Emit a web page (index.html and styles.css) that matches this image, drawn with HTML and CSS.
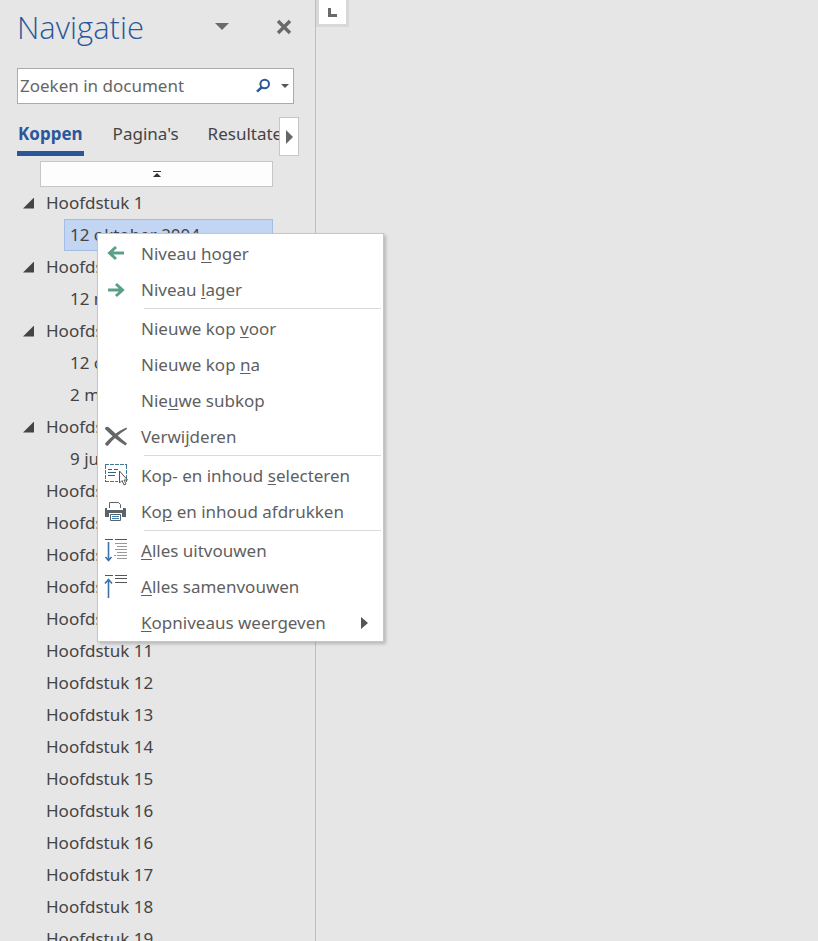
FILE: index.html
```html
<!DOCTYPE html>
<html lang="nl">
<head>
<meta charset="utf-8">
<title>Navigatie</title>
<link rel="stylesheet" href="styles.css">
</head>
<body>
<div class="app">
  <aside class="pane">
    <header class="pane-head">
      <h1>Navigatie</h1>
      <button class="icon-btn pane-menu" aria-label="Opties"><svg width="14" height="8" viewBox="0 0 14 8"><path d="M0 0h14L7 7z" fill="#6a6a6a"/></svg></button>
      <button class="icon-btn" aria-label="Sluiten"><svg width="16" height="16" viewBox="0 0 16 16"><path d="M2 2l12 12M14 2L2 14" stroke="#6a6a6a" stroke-width="3.4" fill="none"/></svg></button>
    </header>
    <form class="search">
      <input type="text" placeholder="Zoeken in document" aria-label="Zoeken in document">
      <button type="button" class="icon-btn" aria-label="Zoeken"><svg width="16" height="16" viewBox="0 0 16 16"><circle cx="9.700" cy="6" r="4.300" fill="none" stroke="#2b579a" stroke-width="2"/><path d="M6.800 9.200L2 13.600" stroke="#2b579a" stroke-width="2.600"/></svg></button>
      <button type="button" class="icon-btn search-more" aria-label="Zoekopties"><svg width="8" height="4" viewBox="0 0 8 4"><path d="M0 0h8L4 4z" fill="#555"/></svg></button>
    </form>
    <div class="tabs">
      <div class="tab-strip">
        <button class="tab active">Koppen</button>
        <button class="tab">Pagina's</button>
        <button class="tab">Resultaten</button>
      </div>
      <button class="tab-scroll" aria-label="Volgende tab"><svg width="7" height="14" viewBox="0 0 7 14"><path d="M0 0l7 7-7 7z" fill="#666"/></svg></button>
    </div>
    <button class="to-top" aria-label="Naar begin"><svg width="8" height="7" viewBox="0 0 8 7"><path d="M0 0h8v1H0zM4 2l4 4H0z" fill="#333"/></svg></button>
    <ul class="tree">
      <li><button class="row open">Hoofdstuk 1</button>
        <ul>
          <li class="menu-anchor"><button class="row sub selected">12 oktober 2004</button>
            <div class="menu" role="menu">
              <button class="item" role="menuitem"><svg class="ico" viewBox="0 0 24 24"><path d="M20 11H6M12 5l-6.500 6 6.500 6" fill="none" stroke="#5aa088" stroke-width="3"/></svg><span>Niveau <u>h</u>oger</span></button>
              <button class="item" role="menuitem"><svg class="ico" viewBox="0 0 24 24"><path d="M4 12h14M12 6l6.500 6-6.500 6" fill="none" stroke="#5aa088" stroke-width="3"/></svg><span>Niveau <u>l</u>ager</span></button>
              <hr>
              <button class="item" role="menuitem"><span class="ico"></span><span>Nieuwe kop <u>v</u>oor</span></button>
              <button class="item" role="menuitem"><span class="ico"></span><span>Nieuwe kop <u>n</u>a</span></button>
              <button class="item" role="menuitem"><span class="ico"></span><span>Nie<u>u</u>we subkop</span></button>
              <button class="item" role="menuitem"><svg class="ico" viewBox="0 0 24 24"><path d="M1 4C1 2 3 1 5 2.500 11 8 16 13 23 18.500L21.500 20.500C14 16 8 11 1 4z" fill="#666"/><path d="M22.500 2.500l.5 1.500C15 9 9 14 4.500 20 3 22 .5 20 1.500 18 7 12 14 6 22.500 2.500z" fill="#666"/></svg><span>Verwi<u>j</u>deren</span></button>
              <hr>
              <button class="item" role="menuitem"><svg class="ico" viewBox="0 0 24 24"><path d="M1 .5h22M22.500 1v17M1 17.500h13M1.500 1v17" fill="none" stroke="#3f7896" stroke-dasharray="4 1"/><path d="M4 5.500h4M10 5.500h4M4 8.500h8M4 11.500h7" stroke="#35627c"/><path d="M15.500 7v12l2.500-2.500 2 4.500 2-1-2-4h3.500z" fill="#fff" stroke="#555"/></svg><span>Kop- en inhoud <u>s</u>electeren</span></button>
              <button class="item" role="menuitem"><svg class="ico" viewBox="0 0 24 24"><path d="M5.500 8V2.500h9l2 2V8" fill="#fff" stroke="#5a626a"/><path d="M1 8h2v3h16V8h2q1 0 1 1v8h-4v-4H5v4H1z" fill="#5a626a"/><path d="M3 10h17v3H3z" fill="#5a626a"/><path d="M6.500 14.500h10v6h-10z" fill="#fff" stroke="#5a626a"/><path d="M8 16.500h7M8 18.500h7" stroke="#3f7fae"/></svg><span>Ko<u>p</u> en inhoud afdrukken</span></button>
              <hr>
              <button class="item" role="menuitem"><svg class="ico" viewBox="0 0 24 24"><path d="M1 .5h8M11 .5h12" stroke="#555"/><path d="M11 4.500h12M13 7.500h10M11 10.500h12M13 13.500h10M10 16.500h2M13 16.500h10M13 19.500h10" stroke="#999"/><path d="M4.500 3v18M1.500 18l3 3.500 3-3.500" fill="none" stroke="#3b74aa" stroke-width="1.600"/></svg><span><u>A</u>lles uitvouwen</span></button>
              <button class="item" role="menuitem"><svg class="ico" viewBox="0 0 24 24"><path d="M1 .5h8M11 .5h12M11 3.500h12M11 7.500h12" stroke="#555"/><path d="M4.500 23V5M1 8.500l3.500-4 3.500 4" fill="none" stroke="#3b74aa" stroke-width="1.600"/></svg><span><u>A</u>lles samenvouwen</span></button>
              <button class="item" role="menuitem" aria-haspopup="true"><span class="ico"></span><span><u>K</u>opniveaus weergeven</span><svg class="more" width="7" height="12" viewBox="0 0 7 12"><path d="M0 0l7 6-7 6z" fill="#555"/></svg></button>
            </div>
          </li>
        </ul>
      </li>
      <li><button class="row open">Hoofdstuk 2</button>
        <ul><li><button class="row sub">12 mei</button></li></ul>
      </li>
      <li><button class="row open">Hoofdstuk 3</button>
        <ul><li><button class="row sub">12 okt</button></li><li><button class="row sub">2 mei</button></li></ul>
      </li>
      <li><button class="row open">Hoofdstuk 4</button>
        <ul><li><button class="row sub">9 juni</button></li></ul>
      </li>
      <li><button class="row">Hoofdstuk 6</button></li>
      <li><button class="row">Hoofdstuk 7</button></li>
      <li><button class="row">Hoofdstuk 8</button></li>
      <li><button class="row">Hoofdstuk 9</button></li>
      <li><button class="row">Hoofdstuk 10</button></li>
      <li><button class="row">Hoofdstuk 11</button></li>
      <li><button class="row">Hoofdstuk 12</button></li>
      <li><button class="row">Hoofdstuk 13</button></li>
      <li><button class="row">Hoofdstuk 14</button></li>
      <li><button class="row">Hoofdstuk 15</button></li>
      <li><button class="row">Hoofdstuk 16</button></li>
      <li><button class="row">Hoofdstuk 16</button></li>
      <li><button class="row">Hoofdstuk 17</button></li>
      <li><button class="row">Hoofdstuk 18</button></li>
      <li><button class="row">Hoofdstuk 19</button></li>
    </ul>
  </aside>
  <main class="canvas">
    <button class="tab-stop" aria-label="Tabstop"><svg width="9" height="9" viewBox="0 0 9 9"><path d="M0 0h3v6h6v3H0z" fill="#6a6a6a"/></svg></button>
  </main>
</div>
</body>
</html>
```
FILE: styles.css
```css
* { box-sizing: border-box; }
body {
  margin: 0;
  background: #e6e6e6;
  color: #444;
  font: 17px/32px "Noto Sans", "Open Sans", sans-serif;
  overflow: hidden;
}
button, input { font: inherit; color: inherit; }
button { border: 0; padding: 0; background: none; text-align: left; }
svg { display: block; flex: none; }
ul { list-style: none; margin: 0; padding: 0; }

.app { display: flex; height: 100vh; }
.pane {
  flex: none;
  width: 316px;
  border-right: 1px solid #bdbdbd;
}
.pane-head {
  display: flex;
  align-items: center;
  height: 56px;
  padding: 0 23px 3px 17px;
}
h1 {
  flex: 1;
  margin: 0;
  color: #2b579a;
  font: 300 31px/40px "Open Sans", "Noto Sans", sans-serif;
}
.icon-btn { display: grid; place-items: center; }
.pane-menu { margin-right: 47px; }

.search {
  display: flex;
  height: 36px;
  margin: 12px 21px 0 17px;
  padding-right: 4px;
  border: 1px solid #ababab;
  background: #fff;
}
.search input {
  flex: 1;
  min-width: 0;
  padding: 0 2px;
  border: 0;
  background: none;
}
.search input::placeholder { color: #666; opacity: 1; }
.search-more { margin-left: 10px; }

.tabs { display: flex; margin: 13px 16px 0 17px; height: 39px; }
.tab-strip { display: flex; flex: 1; min-width: 0; overflow: hidden; gap: 29px; }
.tab { flex: none; height: 39px; border-bottom: 5px solid transparent; line-height: 34px; }
.tab.active { padding: 0 1px; color: #2b579a; border-color: #2b579a; font-weight: 700; }
.tab-scroll {
  display: grid;
  place-items: center;
  width: 20px;
  border: 1px solid #c6c6c6;
  background: #fff;
}
.to-top {
  display: grid;
  place-items: center;
  width: 233px;
  height: 26px;
  margin: 5px 0 0 40px;
  border: 1px solid #c6c6c6;
  background: #fdfdfd;
}

.row {
  display: flex;
  align-items: center;
  height: 32px;
  padding-left: 46px;
  white-space: nowrap;
}
.row.open { padding-left: 23px; gap: 12px; }
.row.open::before {
  content: "";
  width: 11px;
  height: 11px;
  background: #444;
  clip-path: polygon(100% 0, 100% 100%, 0 100%);
}
.row.sub { width: 209px; margin-left: 64px; padding-left: 5px; border: 1px solid transparent; }
.row.selected { background: #c2d5f2; border-color: #a3bde3; }

.menu-anchor { position: relative; }
.menu {
  position: absolute;
  z-index: 1;
  top: 14px;
  left: 97px;
  width: 287px;
  padding: 2px 0 0;
  border: 1px solid #c6c6c6;
  background: #fff;
  box-shadow: 2px 2px 3px rgba(0, 0, 0, .2);
}
.item {
  display: flex;
  align-items: center;
  width: 100%;
  height: 36px;
  padding: 0 15px 0 6px;
  color: #5f5f5f;
  line-height: 24px;
  white-space: nowrap;
}
.item u { text-decoration-thickness: 1px; text-underline-offset: 2px; }
.ico { flex: none; width: 24px; height: 24px; margin-right: 13px; }
.more { margin-left: auto; }
hr { height: 1px; margin: 0 2px 2px 46px; border: 0; background: #dadada; }

.canvas { flex: 1; min-width: 0; }
.tab-stop {
  display: grid;
  place-items: center;
  width: 33px;
  height: 27px;
  border: solid #d8d8d8;
  border-width: 0 3px 3px;
  background: #fff;
}
```
